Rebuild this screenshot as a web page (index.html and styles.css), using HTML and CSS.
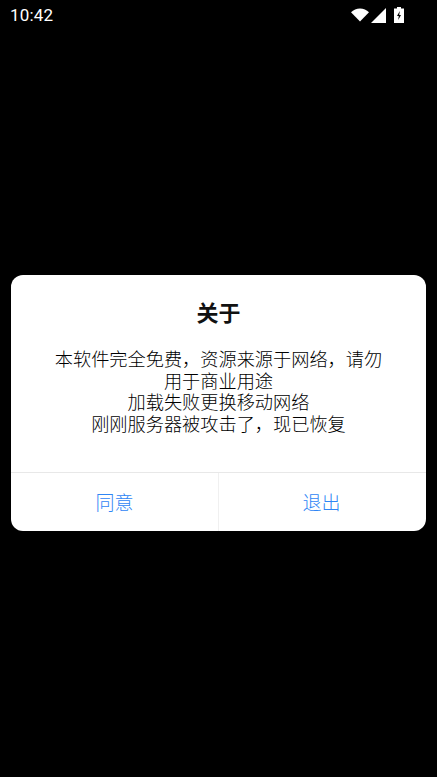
FILE: index.html
```html
<!DOCTYPE html>
<html lang="zh-CN">
<head>
<meta charset="utf-8">
<title>关于</title>
<link rel="stylesheet" href="styles.css">
</head>
<body>
<div class="status">
  <span class="time">10:42</span>
  <div class="icons">
    <svg class="wifi" width="18" height="14" viewBox="0 0 18 14"><path d="M0 4.200C2.400 1.800 5.600.4 9 .4s6.600 1.400 9 3.800L9 13.600z" fill="#fff"/></svg>
    <svg class="signal" width="15" height="15" viewBox="0 0 15 15"><path d="M15 0v15H0z" fill="#fff"/></svg>
    <svg class="battery" width="10" height="16" viewBox="0 0 10 16"><path fill-rule="evenodd" d="M3 0h4v1.500h3V16H0V1.500h3zM5.800 4 3 9h1.800l-.6 4L7 8H5.200z" fill="#fff"/></svg>
  </div>
</div>
<main class="stage">
  <section class="dialog">
    <h1 class="title">关于</h1>
    <p class="message">本软件完全免费，资源来源于网络，请勿用于商业用途<br>加载失败更换移动网络<br>刚刚服务器被攻击了，现已恢复</p>
    <div class="actions">
      <button class="action">同意</button>
      <button class="action">退出</button>
    </div>
  </section>
</main>
</body>
</html>
```
FILE: styles.css
```css
* { box-sizing: border-box; }
html, body { margin: 0; height: 100%; }
body {
  background: #000;
  font-family: Roboto, "Noto Sans CJK SC", sans-serif;
  overflow: hidden;
}
.status {
  height: 30px;
  padding: 0 33px 0 10px;
  display: flex;
  align-items: center;
  justify-content: space-between;
  color: #fff;
}
.time { font-size: 17px; letter-spacing: .2px; }
.icons { display: flex; align-items: center; }
.wifi { margin-right: 2px; }
.signal { margin-right: 8px; }
.stage { padding: 245px 11px 0; }
.dialog {
  background: #fff;
  border-radius: 12px;
  height: 256px;
  display: flex;
  flex-direction: column;
  overflow: hidden;
}
.title {
  margin: 0;
  padding-top: 25px;
  font-size: 22px;
  line-height: 28px;
  font-weight: 700;
  text-align: center;
  color: #111;
}
.message {
  margin: 21px 0 0;
  padding: 0 43px;
  font-size: 18.200px;
  line-height: 21.500px;
  font-weight: 300;
  text-align: center;
  color: #000;
}
.actions {
  margin-top: auto;
  height: 59px;
  border-top: 1px solid #e8e8e8;
  display: grid;
  grid-template-columns: 207px 1fr;
}
.action {
  border: 0;
  background: none;
  padding: 0 0 2px;
  font: inherit;
  font-size: 19px;
  font-weight: 300;
  color: #2f86f5;
}
.action + .action { border-left: 1px solid #f0f0f0; padding-right: 2px; }
```
